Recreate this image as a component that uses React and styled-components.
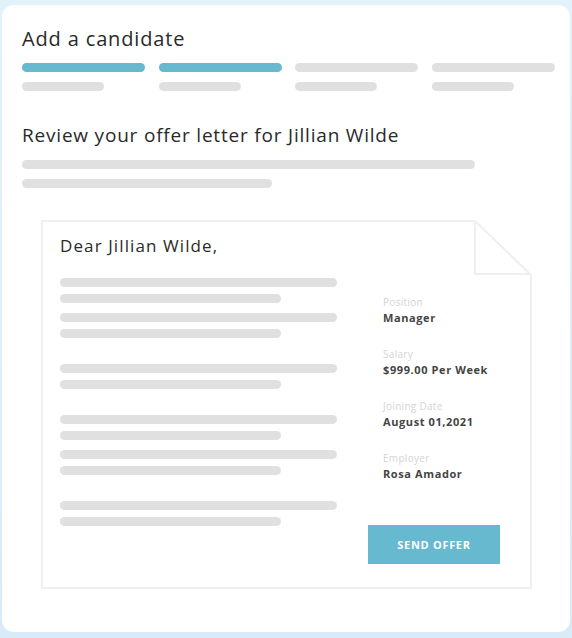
import React from 'react';
import styled, { createGlobalStyle } from 'styled-components';

const GlobalStyle = createGlobalStyle`
  html, body {
    margin: 0;
    padding: 0;
  }
  body {
    background: linear-gradient(180deg, #e2f2fb 0%, #d8ebf7 100%);
    font-family: 'Open Sans', 'Noto Sans', sans-serif;
    color: #2b2b2b;
  }
`;

const Card = styled.div`
  box-sizing: border-box;
  width: 568px;
  height: 627px;
  margin: 5px 2px 6px 2px;
  background: #ffffff;
  border-radius: 12px;
  padding: 22px 18px 0 20px;
`;

const Title = styled.h1`
  margin: 0;
  font-size: 20px;
  line-height: 24px;
  font-weight: 400;
  letter-spacing: 0.85px;
  color: #2a2a2a;
`;

const Steps = styled.div`
  display: grid;
  grid-template-columns: repeat(4, 123px);
  column-gap: 13.5px;
  margin-top: 12px;
`;

const Step = styled.div`
  display: flex;
  flex-direction: column;
  gap: 10px;
`;

const Bar = styled.div`
  height: 9px;
  width: ${(p) => p.w}px;
  border-radius: 5px;
  background: ${(p) => (p.active ? '#67b9d0' : '#e0e0e0')};
`;

const Subtitle = styled.h2`
  margin: 32px 0 0 0;
  font-size: 19px;
  line-height: 24px;
  font-weight: 400;
  letter-spacing: 0.8px;
  color: #2a2a2a;
`;

const Intro = styled.div`
  display: flex;
  flex-direction: column;
  gap: 10px;
  margin-top: 13px;
`;

const Letter = styled.div`
  position: relative;
  box-sizing: border-box;
  width: 491px;
  height: 369px;
  margin: 32px 0 0 19px;
  border: 2px solid #efefef;
  padding: 13px 17px 0 17px;
`;

const Fold = styled.svg`
  position: absolute;
  top: -2px;
  right: -2px;
`;

const Greeting = styled.div`
  font-size: 17px;
  line-height: 22px;
  letter-spacing: 1.1px;
  color: #2a2a2a;
`;

const Body = styled.div`
  display: flex;
  margin-top: 21px;
`;

const Lines = styled.div`
  width: 277px;
  display: flex;
  flex-direction: column;
`;

const Para = styled.div`
  display: flex;
  flex-direction: column;
  gap: 7px;
  margin-bottom: ${(p) => (p.last ? 26 : 10)}px;
`;

const Details = styled.div`
  margin-left: 46px;
  margin-top: 18px;
  display: flex;
  flex-direction: column;
  width: 132px;
`;

const Field = styled.div`
  display: flex;
  flex-direction: column;
  gap: 2px;
  margin-bottom: 23px;
`;

const Label = styled.div`
  font-size: 10px;
  line-height: 13px;
  letter-spacing: 0.3px;
  color: #d4d4d4;
`;

const Value = styled.div`
  font-size: 11px;
  line-height: 14px;
  font-weight: 700;
  letter-spacing: 0.6px;
  color: #444444;
`;

const SendButton = styled.button`
  margin: 21px 0 0 -15px;
  width: 132px;
  height: 39px;
  border: none;
  background: #67b9d0;
  color: #ffffff;
  font-family: inherit;
  font-size: 11px;
  font-weight: 700;
  letter-spacing: 0.7px;
  cursor: pointer;
`;

const paragraphs = [false, true, true, false, true, true];

const fields = [
  ['Position', 'Manager'],
  ['Salary', '$999.00 Per Week'],
  ['Joining Date', 'August 01,2021'],
  ['Employer', 'Rosa Amador'],
];

export default function App() {
  return (
    <>
      <GlobalStyle />
      <Card>
        <Title>Add a candidate</Title>
        <Steps>
          {[true, true, false, false].map((active, i) => (
            <Step key={i}>
              <Bar w={123} active={active} />
              <Bar w={82} />
            </Step>
          ))}
        </Steps>
        <Subtitle>Review your offer letter for Jillian Wilde</Subtitle>
        <Intro>
          <Bar w={453} />
          <Bar w={250} />
        </Intro>
        <Letter>
          <Fold width="58" height="55" viewBox="0 0 58 55">
            <polygon points="0,0 58,0 58,55" fill="#ffffff" />
            <polyline points="1,1 56,54 1,54 1,1" fill="none" stroke="#efefef" strokeWidth="2" />
          </Fold>
          <Greeting>Dear Jillian Wilde,</Greeting>
          <Body>
            <Lines>
              {paragraphs.map((last, i) => (
                <Para key={i} last={last}>
                  <Bar w={277} />
                  <Bar w={221} />
                </Para>
              ))}
            </Lines>
            <Details>
              {fields.map(([label, value]) => (
                <Field key={label}>
                  <Label>{label}</Label>
                  <Value>{value}</Value>
                </Field>
              ))}
              <SendButton>SEND OFFER</SendButton>
            </Details>
          </Body>
        </Letter>
      </Card>
    </>
  );
}
